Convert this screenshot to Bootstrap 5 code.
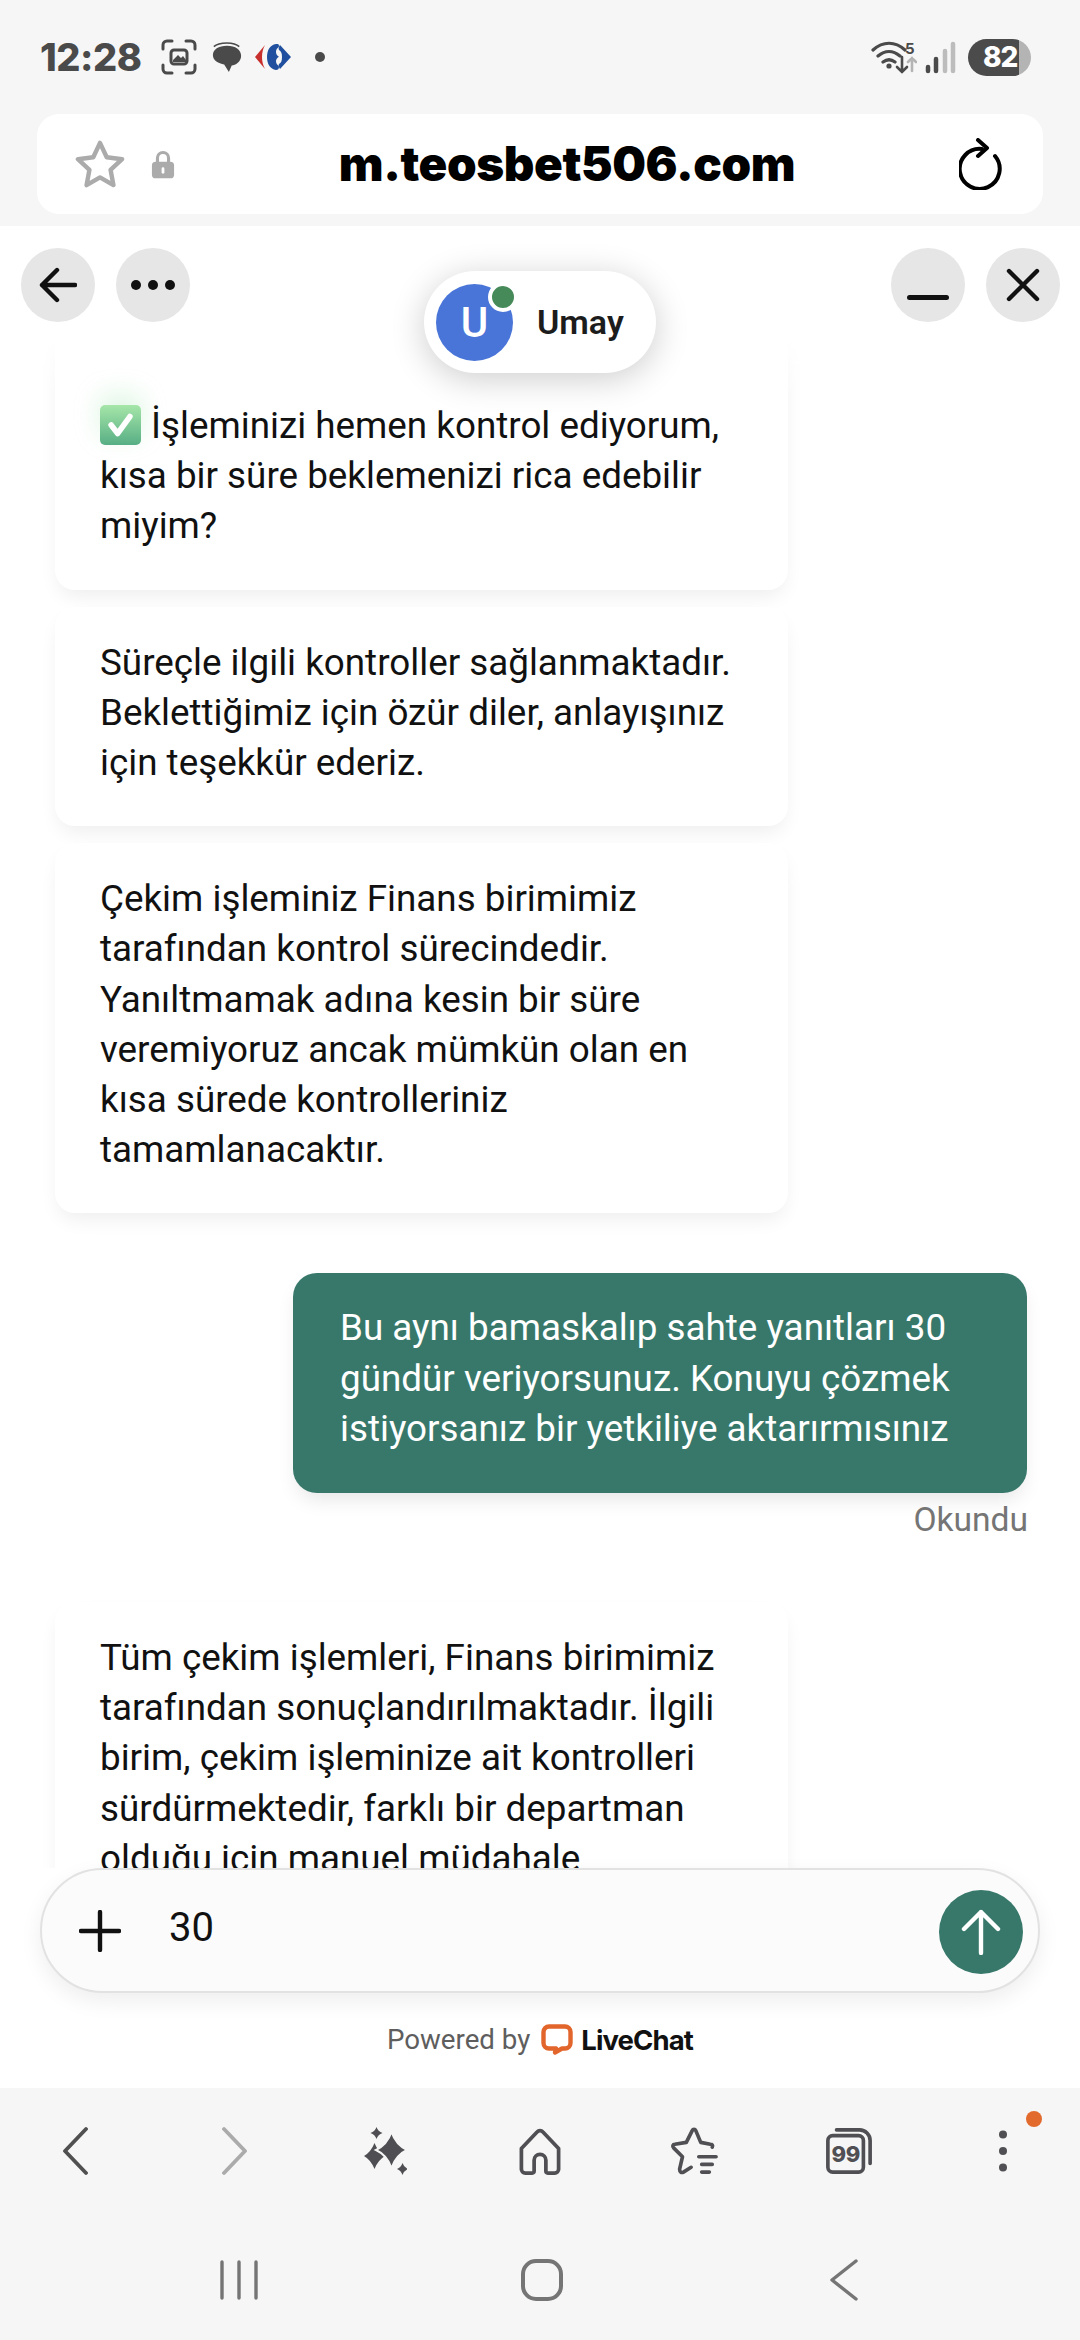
<!DOCTYPE html>
<html lang="tr">
<head>
  <meta charset="UTF-8">
  <title>Umay - LiveChat</title>
  <meta name="viewport" content="width=device-width, initial-scale=1">
  <link href="https://cdn.jsdelivr.net/npm/bootstrap@5.3.0/dist/css/bootstrap.min.css" rel="stylesheet">
  <style>
    html, body { width: 1080px; height: 2340px; overflow: hidden; }
    body { background: #f6f6f6; font-family: Roboto, "Liberation Sans", sans-serif; color: #111; }
    svg { display: block; flex: none; }

    /* status bar + address bar */
    .status-row { height: 114px; padding: 0 49px 0 40px; }
    .clock { font-family: Inter, Roboto, sans-serif; font-weight: 800; font-size: 38px; color: #4a4a4a; letter-spacing: -.5px; width: 105px; line-height: 1; }
    .status-gap { margin-left: 14px; }
    .status-gap-sm { margin-left: 12px; }
    .status-dot { width: 10px; height: 10px; background: #4a4a4a; margin-left: 24px; }
    .batt { width: 63px; height: 37px; margin-left: 11px; border-radius: 19px; background: linear-gradient(90deg, #4b4b4b 0 81%, #b4b4b4 81%); color: #fff; font-family: Inter, sans-serif; font-weight: 800; font-size: 28px; line-height: 37px; padding-left: 15px; letter-spacing: -1.2px; }
    .addr-bar { height: 100px; margin: 0 37px; background: #fff; border-radius: 22px; padding: 0 38px 0 38px; }
    .addr-lock { margin-left: 26px; }
    .addr-text { font-family: Inter, Roboto, sans-serif; font-weight: 900; font-size: 47.5px; color: #000; letter-spacing: -.4px; line-height: 1; }

    /* chat window */
    .chat-pane { height: 1862px; margin-top: 12px; background: #fff; position: relative; overflow: hidden; }
    .round-btn { width: 74px; height: 74px; border-radius: 50%; background: #e6e6e6; }
    .btn-gap { gap: 21px; }
    .minus-mark { margin-top: 47px; }
    .chat-top { position: absolute; top: 22px; left: 21px; right: 20px; z-index: 3; }
    .top-fade { position: absolute; top: 0; left: 0; right: 0; height: 172px; z-index: 2; background: linear-gradient(180deg, #fff 62%, rgba(255,255,255,0)); }
    .agent-pill { position: absolute; z-index: 3; top: 45px; left: 424px; width: 232px; height: 102px; border-radius: 51px; background: #fff; box-shadow: 0 6px 34px rgba(0,0,0,.2); padding-left: 12px; }
    .agent-ava { width: 77px; height: 77px; border-radius: 50%; background: #4a75d8; color: #fff; font-weight: 500; font-size: 42px; line-height: 77px; text-align: center; }
    .agent-dot { position: absolute; top: 11px; left: 64px; width: 30px; height: 30px; border-radius: 50%; background: #458a58; border: 4px solid #fff; }
    .agent-name { font-weight: 600; font-size: 34px; margin-left: 24px; color: #1c1c1c; }

    .msg-feed { position: absolute; top: 0; left: 0; right: 0; bottom: 0; padding-top: 101px; }
    .bubble-in, .bubble-out { font-size: 36.8px; line-height: 50.2px; }
    .bubble-in { width: 733px; margin-left: 55px; padding: 31px 40px 38px 45px; background: #fff; border-radius: 20px; box-shadow: 0 10px 20px -4px rgba(0,0,0,.07); margin-bottom: 17px; }
    .bubble-first { padding-top: 74px; border-radius: 0 0 20px 20px; }
    .bubble-out { width: 734px; margin-left: 293px; margin-top: 60px; padding: 30px 30px 39px 47px; background: #37786b; color: #fff; border-radius: 24px; box-shadow: 0 10px 20px -4px rgba(0,0,0,.1); }
    .read-mark { margin: 7px 52px 0 0; text-align: right; font-size: 33.6px; line-height: 40px; color: #757575; }
    .bubble-last { margin-top: 62px; }
    .tick-box { display: inline-block; width: 41px; height: 40px; margin-right: 10px; vertical-align: -7px; background: linear-gradient(180deg, #a6e6a9, #57ae84); border-radius: 5px; position: relative; z-index: 3; box-shadow: 0 -10px 26px rgba(120,220,140,.25); }
    .tick-box svg { position: absolute; left: 5px; top: 5px; }

    /* composer */
    .composer-wrap { position: absolute; left: 0; right: 0; bottom: 0; height: 220px; background: #fff; z-index: 2; }
    .composer { height: 125px; margin: 0 40px; border: 2px solid #e2e2e2; border-radius: 63px; background: #fbfbfb; box-shadow: 0 8px 22px rgba(0,0,0,.07); padding: 0 15px 0 37px; }
    .composer-val { font-size: 40px; color: #111; margin-left: 48px; margin-top: -6px; }
    .send-btn { width: 84px; height: 84px; border-radius: 50%; background: #37786b; margin-top: 3px; }
    .powered { margin-top: 29px; font-size: 27.7px; line-height: 36px; color: #5e5e5e; }
    .lc-logo { margin: 0 8px 0 11px; }
    .lc-name { font-family: Inter, sans-serif; font-weight: 700; font-size: 27.5px; color: #111; letter-spacing: -.9px; }

    /* browser toolbar */
    .tool-bar { height: 126px; position: relative; }
    .tool-cell { flex: 1; }
    .shift-left { margin-right: 5px; }
    .shift-right { margin-left: 7px; }
    .menu-dot { position: absolute; top: 23px; right: 38px; width: 16px; height: 16px; border-radius: 50%; background: #e26a2c; }
    .nav-keys { height: 126px; padding-top: 6px; }
    .key-recent { margin-left: 219px; }
    .key-home { margin-left: 261px; }
    .key-back { margin-left: 265px; }
  </style>
</head>
<body>

  <div class="status-row d-flex align-items-center justify-content-between">
    <div class="d-flex align-items-center">
      <span class="clock">12:28</span>
      <svg class="ms-3" width="36" height="36" viewBox="0 0 36 36" fill="none" stroke="#4a4a4a" stroke-width="3" stroke-linecap="round">
        <path d="M2 10V6a4 4 0 0 1 4-4h5M25 2h5a4 4 0 0 1 4 4v4M34 26v4a4 4 0 0 1-4 4h-5M11 34H6a4 4 0 0 1-4-4v-4"/>
        <rect x="10" y="11" width="16" height="14" rx="3" stroke-width="3"/>
        <path d="M12 21l5-5 3 3 2-2 3 4v2H12z" fill="#4a4a4a" stroke="none"/>
      </svg>
      <svg class="status-gap" width="32" height="32" viewBox="0 0 34 34">
        <path d="M3 6c3-3 9-4 14-4s10 1 13 4" fill="none" stroke="#4a4a4a" stroke-width="1.6"/>
        <path d="M17 5c9 0 15 4 15 11 0 6-6 10-10 10l-3 7-5-8C8 24 2 21 2 15 2 9 8 5 17 5z" fill="#4a4a4a"/>
      </svg>
      <svg class="status-gap-sm" width="36" height="26" viewBox="0 0 36 26">
        <path d="M10 1L0 13l10 12c-4-7-4-17 0-24z" fill="#c8302e"/>
        <path d="M21 0c-6 1-9 6-9 13s3 12 9 13c2 0 3-1 3-3s-3-2-3-6c0-2 2-4 3-4s-3-1-3-5 3-4 3-6-1-2-3-2z" fill="#1f4f9e"/>
        <path d="M25 1l11 12-11 12c-1-2-2-3-1-5 2-1 3-3 3-7s-1-6-3-7c-1-2 0-3 1-5z" fill="#1f4f9e"/>
      </svg>
      <span class="status-dot rounded-circle d-block"></span>
    </div>
    <div class="d-flex align-items-center">
      <svg width="46" height="34" viewBox="0 0 46 34" fill="none" stroke="#4a4a4a" stroke-width="3.200" stroke-linecap="round">
        <path d="M2 10c10-9 22-9 32 0M7 16c7-6 15-6 22 0M12 22c4-3 8-3 12 0"/>
        <circle cx="18" cy="26" r="2.600" fill="#4a4a4a" stroke="none"/>
        <path d="M31 17v15M26 27l5 5 5-5" stroke-width="2.600"/>
        <path d="M41 31V18M37 22l4-4 4 4" stroke="#b4b4b4" stroke-width="2.600"/>
        <text x="34" y="14" font-family="Inter, sans-serif" font-size="15" font-weight="700" fill="#4a4a4a" stroke="none">5</text>
      </svg>
      <svg class="ms-2" width="32" height="34" viewBox="0 0 32 34" stroke-width="4.500" stroke-linecap="round">
        <path d="M3 27v4" stroke="#4a4a4a"/><path d="M11 19v12" stroke="#4a4a4a"/>
        <path d="M20 11v20" stroke="#bcbcbc"/><path d="M28 4v27" stroke="#bcbcbc"/>
      </svg>
      <div class="batt">82</div>
    </div>
  </div>

  <div class="addr-bar d-flex align-items-center">
    <svg width="50" height="48" viewBox="0 0 52 50" fill="none" stroke="#ababab" stroke-width="4.600" stroke-linejoin="round">
      <path d="M26 3l7 15 16 2-12 11 3 16-14-8-14 8 3-16L3 20l16-2z"/>
    </svg>
    <svg class="addr-lock" width="24" height="31" viewBox="0 0 26 32">
      <path d="M7 14V9a6 6 0 0 1 12 0v5" fill="none" stroke="#ababab" stroke-width="3.400"/>
      <rect x="1" y="13" width="24" height="18" rx="4" fill="#ababab"/>
      <rect x="11.500" y="19" width="3" height="7" rx="1.500" fill="#fff"/>
    </svg>
    <div class="flex-grow-1 text-center addr-text">m.teosbet506.com</div>
    <svg width="46" height="52" viewBox="0 0 46 52" fill="none" stroke="#000" stroke-width="4" stroke-linecap="round" stroke-linejoin="round">
      <path d="M36 18a20 20 0 1 1-13-7"/><path d="M19 2l9 8-9 8"/>
    </svg>
  </div>

  <div class="chat-pane">
    <div class="top-fade"></div>
    <div class="chat-top d-flex justify-content-between">
      <div class="d-flex btn-gap">
        <div class="round-btn d-flex align-items-center justify-content-center">
          <svg width="38" height="36" viewBox="0 0 38 36" fill="none" stroke="#111" stroke-width="4.400" stroke-linecap="round" stroke-linejoin="round"><path d="M36 18H3M18 3L3 18l15 15"/></svg>
        </div>
        <div class="round-btn d-flex align-items-center justify-content-center">
          <svg width="46" height="12" viewBox="0 0 46 12" fill="#111"><circle cx="6" cy="6" r="5"/><circle cx="23" cy="6" r="5"/><circle cx="40" cy="6" r="5"/></svg>
        </div>
      </div>
      <div class="d-flex btn-gap">
        <div class="round-btn d-flex justify-content-center">
          <svg class="minus-mark" width="42" height="6" viewBox="0 0 42 6"><rect width="42" height="5" rx="2.500" fill="#111"/></svg>
        </div>
        <div class="round-btn d-flex align-items-center justify-content-center">
          <svg width="34" height="34" viewBox="0 0 34 34" stroke="#111" stroke-width="4.400" stroke-linecap="round"><path d="M3 3l28 28M31 3L3 31"/></svg>
        </div>
      </div>
    </div>

    <div class="agent-pill d-flex align-items-center">
      <div class="agent-ava">U</div>
      <span class="agent-dot"></span>
      <span class="agent-name">Umay</span>
    </div>

    <div class="msg-feed">
      <div class="bubble-in bubble-first"><span class="tick-box"><svg width="31" height="30" viewBox="0 0 32 32" fill="none" stroke="#fff" stroke-width="6" stroke-linecap="round" stroke-linejoin="round"><path d="M6 16l7 9L26 7"/></svg></span>İşleminizi hemen kontrol ediyorum,<br>kısa bir süre beklemenizi rica edebilir<br>miyim?</div>
      <div class="bubble-in">Süreçle ilgili kontroller sağlanmaktadır.<br>Beklettiğimiz için özür diler, anlayışınız<br>için teşekkür ederiz.</div>
      <div class="bubble-in">Çekim işleminiz Finans birimimiz<br>tarafından kontrol sürecindedir.<br>Yanıltmamak adına kesin bir süre<br>veremiyoruz ancak mümkün olan en<br>kısa sürede kontrolleriniz<br>tamamlanacaktır.</div>
      <div class="bubble-out">Bu aynı bamaskalıp sahte yanıtları 30<br>gündür veriyorsunuz. Konuyu çözmek<br>istiyorsanız bir yetkiliye aktarırmısınız</div>
      <div class="read-mark">Okundu</div>
      <div class="bubble-in bubble-last">Tüm çekim işlemleri, Finans birimimiz<br>tarafından sonuçlandırılmaktadır. İlgili<br>birim, çekim işleminize ait kontrolleri<br>sürdürmektedir, farklı bir departman<br>olduğu için manuel müdahale</div>
    </div>

    <div class="composer-wrap">
      <div class="composer d-flex align-items-center">
        <svg width="42" height="42" viewBox="0 0 42 42" stroke="#111" stroke-width="4.400" stroke-linecap="round"><path d="M21 2v38M2 21h38"/></svg>
        <span class="composer-val flex-grow-1">30</span>
        <div class="send-btn d-flex align-items-center justify-content-center">
          <svg width="40" height="46" viewBox="0 0 40 46" fill="none" stroke="#fff" stroke-width="4.400" stroke-linecap="round" stroke-linejoin="round"><path d="M20 44V3M3 20L20 3l17 17"/></svg>
        </div>
      </div>
      <div class="powered d-flex align-items-center justify-content-center">
        <span>Powered by</span>
        <svg class="lc-logo" width="32" height="32" viewBox="0 0 32 32" fill="none" stroke="#e2652c" stroke-width="4.400" stroke-linejoin="round"><path d="M8 2.500h16a5.500 5.500 0 0 1 5.500 5.500v11a5.500 5.500 0 0 1-5.500 5.500h-3l-7 4 1-4H8A5.500 5.500 0 0 1 2.500 19V8A5.500 5.500 0 0 1 8 2.500z"/></svg>
        <span class="lc-name">LiveChat</span>
      </div>
    </div>
  </div>

  <div class="tool-bar d-flex align-items-center">
    <div class="tool-cell d-flex justify-content-center">
      <svg class="shift-left" width="26" height="50" viewBox="0 0 26 50" fill="none" stroke="#505050" stroke-width="3.800" stroke-linecap="round" stroke-linejoin="round"><path d="M24 3L3 25l21 22"/></svg>
    </div>
    <div class="tool-cell d-flex justify-content-center">
      <svg class="shift-right" width="26" height="50" viewBox="0 0 26 50" fill="none" stroke="#ababab" stroke-width="3.800" stroke-linecap="round" stroke-linejoin="round"><path d="M2 3l21 22L2 47"/></svg>
    </div>
    <div class="tool-cell d-flex justify-content-center">
      <svg width="43" height="48" viewBox="0 0 43 48" fill="#4f4f53">
        <path d="M12.500 0Q14 4.500 18.500 6 14 7.500 12.500 12 11 7.500 6.500 6 11 4.500 12.500 0z"/>
        <path d="M38.500 36Q40 40.500 44 42 40 43.500 38.500 48 37 43.500 33 42 37 40.500 38.500 36z"/>
        <path d="M10.500 16Q14 25 21 29 14 33 10.500 42 7 33 0 29 7 25 10.500 16z"/>
        <path d="M27.500 5Q32 18 43 23 32 28 27.500 41 23 28 12 23 23 18 27.500 5z" stroke="#f6f6f6" stroke-width="2"/>
      </svg>
    </div>
    <div class="tool-cell d-flex justify-content-center">
      <svg width="44" height="47" viewBox="0 0 44 48" fill="none" stroke="#505054" stroke-width="3.800" stroke-linejoin="round"><path d="M3 21L19 4a4 4 0 0 1 6 0l16 17v21a4 4 0 0 1-4 4h-7a2 2 0 0 1-2-2V33a6 6 0 0 0-12 0v11a2 2 0 0 1-2 2H7a4 4 0 0 1-4-4z"/></svg>
    </div>
    <div class="tool-cell d-flex justify-content-center">
      <svg width="50" height="48" viewBox="0 0 50 50" fill="none" stroke="#505054" stroke-width="3.800" stroke-linecap="round" stroke-linejoin="round"><path d="M44 21c1-2 0-3-2-3l-10-2L27 4c-1-2-3-2-4 0l-6 12-12 2c-2 0-3 2-1 4l9 9-3 13c0 3 2 4 4 3l8-5"/><path d="M30 31h18M33 39h11M33 47h8"/></svg>
    </div>
    <div class="tool-cell d-flex justify-content-center">
      <svg width="48" height="48" viewBox="0 0 50 50" fill="none" stroke="#505054" stroke-width="3.800"><path d="M12 3h24a11 11 0 0 1 11 11v24" stroke-linecap="round"/><rect x="3" y="9" width="37" height="38" rx="5"/><text x="21.500" y="36" text-anchor="middle" font-family="Inter, sans-serif" font-weight="800" font-size="23" fill="#505054" stroke="none" letter-spacing="-.5">99</text></svg>
    </div>
    <div class="tool-cell d-flex justify-content-center">
      <svg width="10" height="42" viewBox="0 0 10 42" fill="#505054"><circle cx="5" cy="4.500" r="4"/><circle cx="5" cy="21" r="4"/><circle cx="5" cy="37.500" r="4"/></svg>
    </div>
    <span class="menu-dot"></span>
  </div>

  <div class="nav-keys d-flex align-items-center">
    <svg class="key-recent" width="40" height="42" viewBox="0 0 40 42" stroke="#757575" stroke-width="3.400" stroke-linecap="round"><path d="M3 3v36M20 3v36M37 3v36"/></svg>
    <svg class="key-home" width="44" height="44" viewBox="0 0 44 44" fill="none" stroke="#757575" stroke-width="4"><rect x="3" y="3" width="38" height="38" rx="13"/></svg>
    <svg class="key-back" width="30" height="44" viewBox="0 0 30 44" fill="none" stroke="#757575" stroke-width="3.400" stroke-linecap="round" stroke-linejoin="round"><path d="M27 3L3 22l24 19"/></svg>
  </div>

</body>
</html>
